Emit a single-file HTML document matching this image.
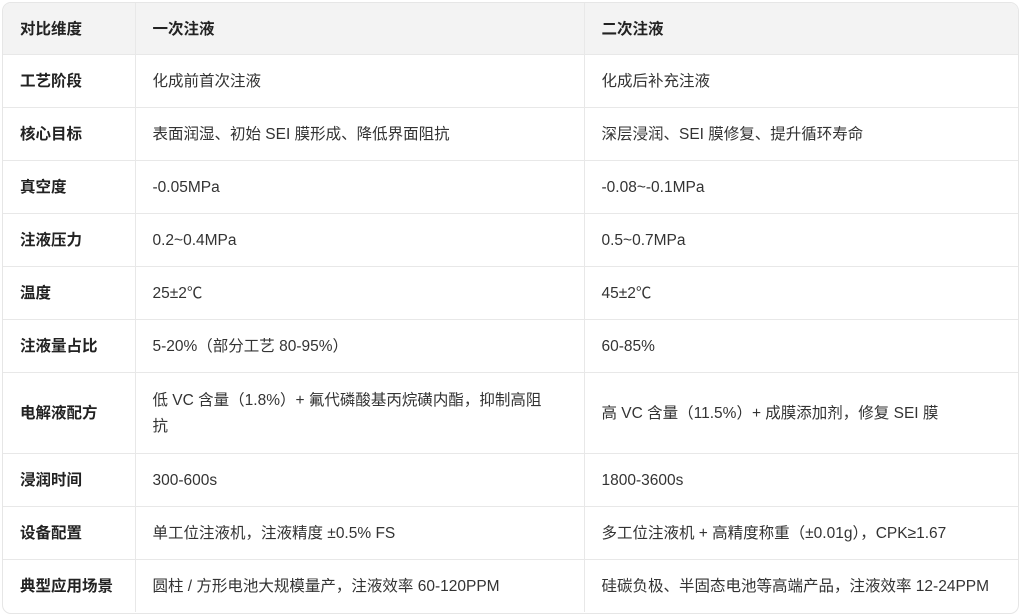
<!DOCTYPE html>
<html><head><meta charset="utf-8"><style>
html,body{margin:0;padding:0;background:#fff;width:1024px;height:616px;overflow:hidden}
.wrap{position:absolute;left:2px;top:2px;width:1015px;height:610px;border:1px solid #e6e6e6;border-radius:9px;overflow:hidden}
table{border-collapse:collapse;width:100%;font-family:"Liberation Sans","Noto Sans CJK SC",sans-serif;font-size:15.5px;color:#333;table-layout:fixed}
td,th{border-bottom:1px solid #e8e8e8;border-right:1px solid #e8e8e8;padding:2px 0 0 17px;text-align:left;vertical-align:middle;line-height:26px}
td:last-child,th:last-child{border-right:none}
tr:last-child td{border-bottom:none}
th{background:#f3f3f3;font-weight:bold;color:#222;height:49px}
td{height:50px}
td:first-child{font-weight:bold;color:#222}
tr.tall td{height:78px}
</style></head><body><div class="wrap"><table>
<colgroup><col style="width:132px"><col style="width:449px"><col></colgroup>
<tr><th>对比维度</th><th>一次注液</th><th>二次注液</th></tr>
<tr><td>工艺阶段</td><td>化成前首次注液</td><td>化成后补充注液</td></tr>
<tr><td>核心目标</td><td>表面润湿、初始 SEI 膜形成、降低界面阻抗</td><td>深层浸润、SEI 膜修复、提升循环寿命</td></tr>
<tr><td>真空度</td><td>-0.05MPa</td><td>-0.08~-0.1MPa</td></tr>
<tr><td>注液压力</td><td>0.2~0.4MPa</td><td>0.5~0.7MPa</td></tr>
<tr><td>温度</td><td>25±2℃</td><td>45±2℃</td></tr>
<tr><td>注液量占比</td><td>5-20%（部分工艺 80-95%）</td><td>60-85%</td></tr>
<tr class="tall"><td>电解液配方</td><td style="padding-right:28px">低 VC 含量（1.8%）+ 氟代磷酸基丙烷磺内酯，抑制高阻抗</td><td>高 VC 含量（11.5%）+ 成膜添加剂，修复 SEI 膜</td></tr>
<tr><td>浸润时间</td><td>300-600s</td><td>1800-3600s</td></tr>
<tr><td>设备配置</td><td>单工位注液机，注液精度 ±0.5% FS</td><td>多工位注液机 + 高精度称重（±0.01g），CPK≥1.67</td></tr>
<tr><td>典型应用场景</td><td>圆柱 / 方形电池大规模量产，注液效率 60-120PPM</td><td>硅碳负极、半固态电池等高端产品，注液效率 12-24PPM</td></tr>
</table></div></body></html>
